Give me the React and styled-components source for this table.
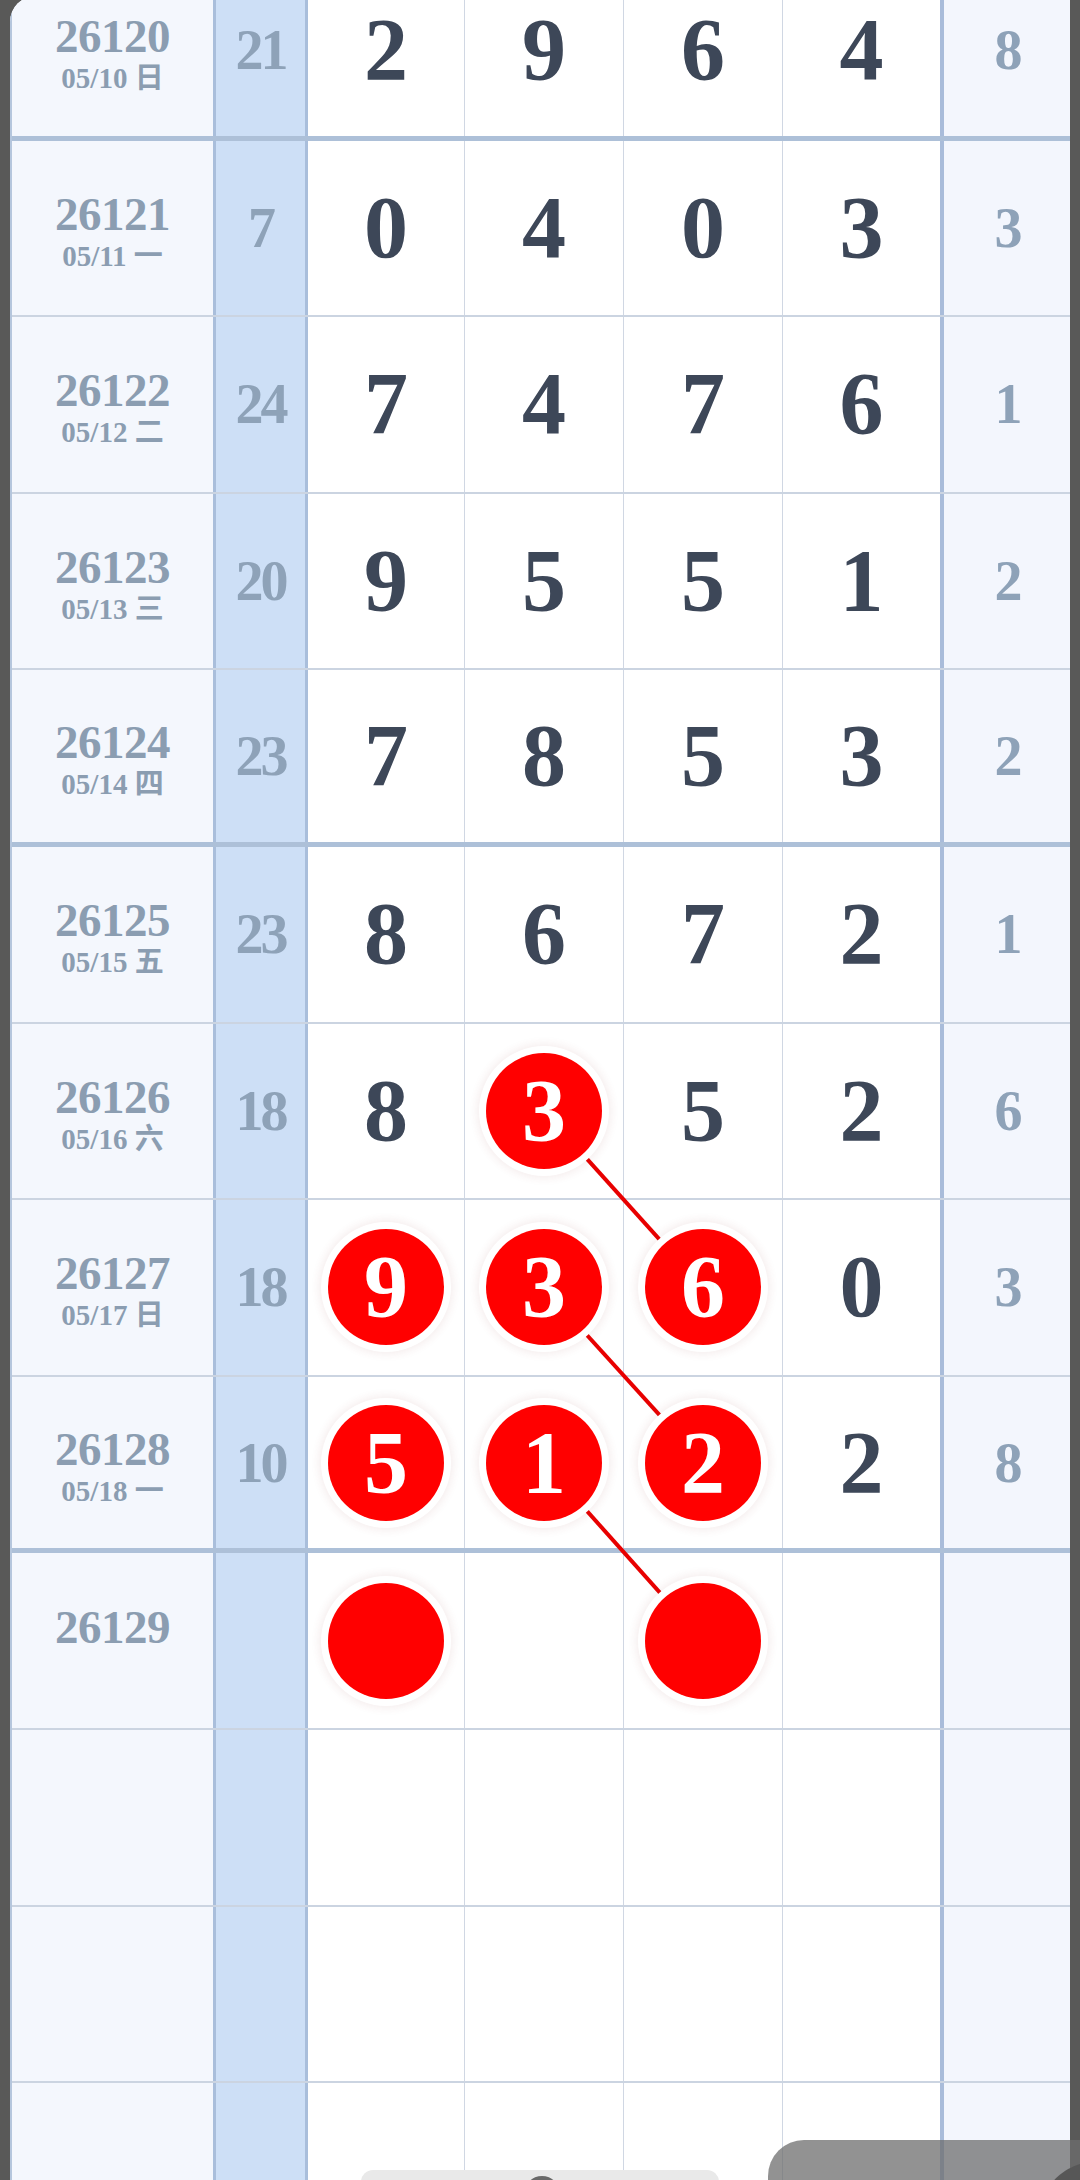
import React from "react";
import styled, { createGlobalStyle } from "styled-components";

const ROW_H = 176.6;
const COL_W = [204, 92, 157, 159, 159, 161, 126];
const THIN = 2;
const THICK = 5;

const rows = [
  { issue: "26120", date: "05/10 日", sum: 21, nums: [2, 9, 6, 4], tail: 8 },
  { issue: "26121", date: "05/11 一", sum: 7, nums: [0, 4, 0, 3], tail: 3 },
  { issue: "26122", date: "05/12 二", sum: 24, nums: [7, 4, 7, 6], tail: 1 },
  { issue: "26123", date: "05/13 三", sum: 20, nums: [9, 5, 5, 1], tail: 2 },
  { issue: "26124", date: "05/14 四", sum: 23, nums: [7, 8, 5, 3], tail: 2 },
  { issue: "26125", date: "05/15 五", sum: 23, nums: [8, 6, 7, 2], tail: 1 },
  { issue: "26126", date: "05/16 六", sum: 18, nums: [8, 3, 5, 2], tail: 6 },
  { issue: "26127", date: "05/17 日", sum: 18, nums: [9, 3, 6, 0], tail: 3 },
  { issue: "26128", date: "05/18 一", sum: 10, nums: [5, 1, 2, 2], tail: 8 },
  { issue: "26129", date: "", sum: "", nums: ["", "", "", ""], tail: "" },
  { issue: "", date: "", sum: "", nums: ["", "", "", ""], tail: "" },
  { issue: "", date: "", sum: "", nums: ["", "", "", ""], tail: "" },
  { issue: "", date: "", sum: "", nums: ["", "", "", ""], tail: "" },
];

// highlighted cells "row-col"
const hits = ["6-1", "7-0", "7-1", "7-2", "8-0", "8-1", "8-2", "9-0", "9-2"];
const links = [
  [6, 1, 7, 2],
  [7, 1, 8, 2],
  [8, 1, 9, 2],
];

const isThick = (i) => i % 4 === 0;

const colCenter = (c) => {
  let x = COL_W[0] + COL_W[1];
  for (let k = 0; k < c; k++) x += COL_W[2 + k];
  return x + (COL_W[2 + c] - 1.5) / 2;
};
const rowCenter = (r) => r * ROW_H + (ROW_H - (isThick(r) ? THICK : THIN)) / 2;

const GlobalStyle = createGlobalStyle`
  html, body {
    margin: 0;
    padding: 0;
    background: #595958;
  }
  body {
    font-family: "Liberation Serif", "Noto Sans CJK SC", serif;
  }
`;

const Page = styled.div`
  position: relative;
  height: 2180px;
  overflow: hidden;
  background: #595958;
`;

const Screen = styled.div`
  margin: -4px 10px 0 10px;
  height: 2184px;
  overflow: hidden;
  background: #fff;
  border-top-left-radius: 26px;
`;

const Table = styled.div`
  position: relative;
  margin-top: -32px;
  border-left: 2px solid #b5c6dd;
`;

const Row = styled.div`
  display: grid;
  grid-template-columns: ${COL_W.map((w) => w + "px").join(" ")};
  height: ${ROW_H}px;
  box-sizing: border-box;
  border-bottom: ${(p) => (p.$thick ? `${THICK}px solid #adc0d8` : `${THIN}px solid #cbd4e1`)};
`;

const IssueCell = styled.div`
  display: flex;
  flex-direction: column;
  align-items: center;
  justify-content: center;
  padding-top: 8px;
  box-sizing: border-box;
  background: #f4f7fd;
  border-right: 3px solid #a9bedb;
  color: #8b9db1;
  font-weight: 700;
`;

const IssueNo = styled.div`
  font-size: 47px;
  line-height: 48px;
  letter-spacing: -0.5px;
`;

const IssueDate = styled.div`
  font-size: 29px;
  line-height: 36px;
`;

const SideCell = styled.div`
  display: flex;
  align-items: center;
  justify-content: center;
  background: ${(p) => (p.$sum ? "#cddff6" : "#f3f6fd")};
  border-right: ${(p) => (p.$sum ? "3px solid #a9bedb" : "none")};
  color: #8ea2b8;
  font-size: 56px;
  font-weight: 700;
  line-height: 1;
  letter-spacing: -3px;
`;

const DigitCell = styled.div`
  display: flex;
  align-items: center;
  justify-content: center;
  background: #fff;
  border-right: ${(p) => (p.$last ? "4px solid #a9bcda" : "1.5px solid #d0d7e3")};
  color: #3d4758;
  font-size: 88px;
  font-weight: 700;
  line-height: 1;
`;

const Ball = styled.div`
  position: relative;
  z-index: 2;
  width: 116px;
  height: 116px;
  border-radius: 50%;
  background: #ff0000;
  color: #fff;
  display: flex;
  align-items: center;
  justify-content: center;
  box-shadow: 0 0 0 7px #fff, 0 0 9px 9px rgba(140, 60, 60, 0.09);
`;

const Links = styled.svg`
  position: absolute;
  left: 0;
  top: 0;
  z-index: 1;
  pointer-events: none;
`;

const HomePill = styled.div`
  position: absolute;
  left: 361px;
  top: 2170px;
  width: 358px;
  height: 24px;
  border-radius: 12px;
  background: #e9e9e9;

  &::after {
    content: "";
    position: absolute;
    left: 163px;
    top: 6px;
    width: 36px;
    height: 36px;
    border-radius: 50%;
    background: #6a6a6a;
  }
`;

const FloatTab = styled.div`
  position: absolute;
  left: 768px;
  right: 0;
  top: 2140px;
  height: 60px;
  border-top-left-radius: 36px;
  background: rgba(110, 110, 110, 0.75);
  overflow: hidden;

  &::after {
    content: "";
    position: absolute;
    left: 272px;
    top: 22px;
    width: 110px;
    height: 110px;
    border-radius: 50%;
    background: #575757;
  }
`;

export default function App() {
  const totalW = COL_W.reduce((a, b) => a + b, 0);
  return (
    <Page>
      <GlobalStyle />
      <Screen>
        <Table>
          {rows.map((r, i) => (
            <Row key={i} $thick={isThick(i)}>
              <IssueCell>
                <IssueNo>{r.issue || "\u00a0"}</IssueNo>
                <IssueDate>{r.date || "\u00a0"}</IssueDate>
              </IssueCell>
              <SideCell $sum>{r.sum}</SideCell>
              {r.nums.map((n, c) => (
                <DigitCell key={c} $last={c === 3}>
                  {hits.includes(`${i}-${c}`) ? <Ball>{n}</Ball> : n}
                </DigitCell>
              ))}
              <SideCell>{r.tail}</SideCell>
            </Row>
          ))}
          <Links width={totalW} height={ROW_H * rows.length}>
            {links.map(([r1, c1, r2, c2], k) => (
              <line
                key={k}
                x1={colCenter(c1)}
                y1={rowCenter(r1)}
                x2={colCenter(c2)}
                y2={rowCenter(r2)}
                stroke="#e80000"
                strokeWidth="4"
              />
            ))}
          </Links>
        </Table>
      </Screen>
      <HomePill />
      <FloatTab />
    </Page>
  );
}
